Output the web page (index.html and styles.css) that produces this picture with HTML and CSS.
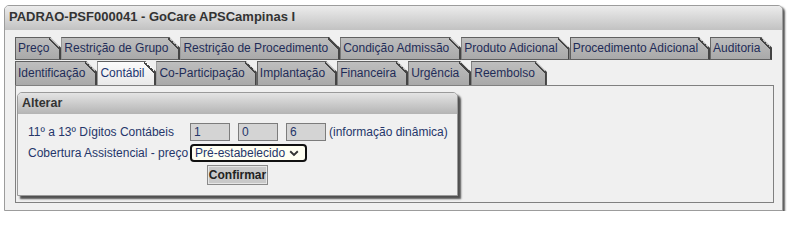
FILE: index.html
```html
<!DOCTYPE html>
<html lang="pt-BR">
<head>
<meta charset="utf-8">
<title>GoCare</title>
<link rel="stylesheet" href="styles.css">
</head>
<body>
<div class="window">
  <div class="titlebar">PADRAO-PSF000041 - GoCare APSCampinas I</div>
  <div class="wbody">
    <div class="tabrow first">
      <div class="tab">Preço</div>
      <div class="tab">Restrição de Grupo</div>
      <div class="tab">Restrição de Procedimento</div>
      <div class="tab">Condição Admissão</div>
      <div class="tab">Produto Adicional</div>
      <div class="tab">Procedimento Adicional</div>
      <div class="tab">Auditoria</div>
    </div>
    <div class="tabrow second">
      <div class="tab">Identificação</div>
      <div class="tab active">Contábil</div>
      <div class="tab">Co-Participação</div>
      <div class="tab">Implantação</div>
      <div class="tab">Financeira</div>
      <div class="tab">Urgência</div>
      <div class="tab">Reembolso</div>
    </div>
    <div class="panel">
      <div class="box">
        <div class="box-head">Alterar</div>
        <div class="box-body">
          <div class="form">
            <div class="label">11º a 13º Dígitos Contábeis</div>
            <div class="field">
              <div class="digits">
                <input class="digit" type="text" value="1" readonly>
                <input class="digit" type="text" value="0" readonly>
                <input class="digit" type="text" value="6" readonly>
              </div>
              <span class="note">(informação dinâmica)</span>
            </div>
            <div class="label">Cobertura Assistencial - preço</div>
            <div class="field">
              <div class="select">
                <span class="select-text">Pré-estabelecido</span>
                <svg class="chev" width="10" height="7" viewBox="0 0 10 7"><path d="M1.2 1.3 L5 5 L8.8 1.3" fill="none" stroke="#333" stroke-width="1.9"/></svg>
              </div>
            </div>
          </div>
          <div class="actions"><button class="btn" type="button">Confirmar</button></div>
        </div>
      </div>
    </div>
  </div>
</div>
</body>
</html>
```
FILE: styles.css
```css
html, body {
  margin: 0;
  padding: 0;
  background: #ffffff;
}
body {
  font-family: "Liberation Sans", Arial, sans-serif;
  font-size: 12px;
}
.window {
  box-sizing: border-box;
  width: 779px;
  height: 206px;
  margin: 5px 0 0 4px;
  border: 1px solid #9c9c9c;
  border-radius: 5px 5px 0 0;
  background: #f0f0f0;
  box-shadow: 2px 2px 2px #5a5a5a;
  overflow: hidden;
}
.titlebar {
  height: 24px;
  box-sizing: border-box;
  padding: 0 0 2px 4px;
  line-height: 22px;
  font-size: 13px;
  font-weight: bold;
  color: #333333;
  background: linear-gradient(#ececec, #c2c2c2);
}
.wbody {
  padding: 7px 8px 0 10px;
}
.tabrow {
  display: flex;
}
.tabrow.second {
  margin-top: 1px;
}
.tab {
  position: relative;
  box-sizing: border-box;
  height: 23px;
  line-height: 21px;
  padding: 0 10px 0 2px;
  border-top: 1px solid #606060;
  border-left: 1px solid #606060;
  border-right: 2px solid #444444;
  border-bottom: 1px solid #606060;
  background: linear-gradient(#bebebe, #a9a9a9);
  color: #1f2c58;
  white-space: nowrap;
  clip-path: polygon(0 0, calc(100% - 11px) 0, 100% 11px, 100% 100%, 0 100%);
}
.tab::after {
  content: "";
  position: absolute;
  top: -1px;
  right: -2px;
  width: 12px;
  height: 12px;
  background: linear-gradient(to top right, transparent calc(50% - 1.6px), #454545 calc(50% - 1.6px), #454545 50%, transparent 50%);
}
.tabrow.second .tab {
  height: 24px;
  border-bottom: none;
  line-height: 23px;
}
.tab.active {
  background: linear-gradient(#fbfbfb, #e9e9e9);
  color: #1d3570;
}
.panel {
  box-sizing: border-box;
  width: 759px;
  height: 118px;
  border: 1px solid #808080;
  padding: 6px 0 0 1px;
}
.box {
  box-sizing: border-box;
  width: 441px;
  height: 104px;
  border: 1px solid #9a9a9a;
  border-radius: 5px 5px 0 0;
  background: #f0f0f0;
  box-shadow: 3px 3px 2px #505050;
  overflow: hidden;
}
.box-head {
  height: 21px;
  line-height: 21px;
  padding-left: 4px;
  font-weight: bold;
  font-size: 12.5px;
  color: #333333;
  background: linear-gradient(#e4e4e4, #b4b4b4);
}
.box-body {
  padding: 9px 0 0 10px;
  color: #25366a;
}
.form {
  display: grid;
  grid-template-columns: 162px auto;
  row-gap: 3px;
  align-items: center;
}
.label {
  white-space: nowrap;
  line-height: 18px;
}
.field {
  display: flex;
  align-items: center;
}
.digits {
  display: flex;
  gap: 8px;
}
.digit {
  box-sizing: border-box;
  width: 40px;
  height: 18px;
  margin: 0;
  padding: 0 3px;
  border: 1px solid #7c7c7c;
  background: #d4d4d4;
  color: #25366a;
  font-family: "Liberation Sans", Arial, sans-serif;
  font-size: 12px;
  outline: none;
}
.note {
  margin-left: 3px;
  white-space: nowrap;
}
.select {
  box-sizing: border-box;
  width: 117px;
  height: 18px;
  border: 2px solid #111111;
  border-radius: 4px;
  background: #fffff2;
  display: flex;
  align-items: center;
  justify-content: space-between;
  padding: 0 6px 0 3px;
  color: #25366a;
}
.select-text {
  white-space: nowrap;
  line-height: 14px;
}
.chev {
  display: block;
}
.actions {
  display: flex;
  justify-content: center;
  margin: 3px 0 0 -10px;
}
.btn {
  box-sizing: border-box;
  width: 61px;
  height: 20px;
  margin: 0;
  padding: 0;
  border: 1px solid #8a8a8a;
  box-shadow: inset 0 0 0 1px #e6e6e6;
  background: #c9c9c9;
  color: #222222;
  font-family: "Liberation Sans", Arial, sans-serif;
  font-size: 12px;
  font-weight: bold;
}
```
